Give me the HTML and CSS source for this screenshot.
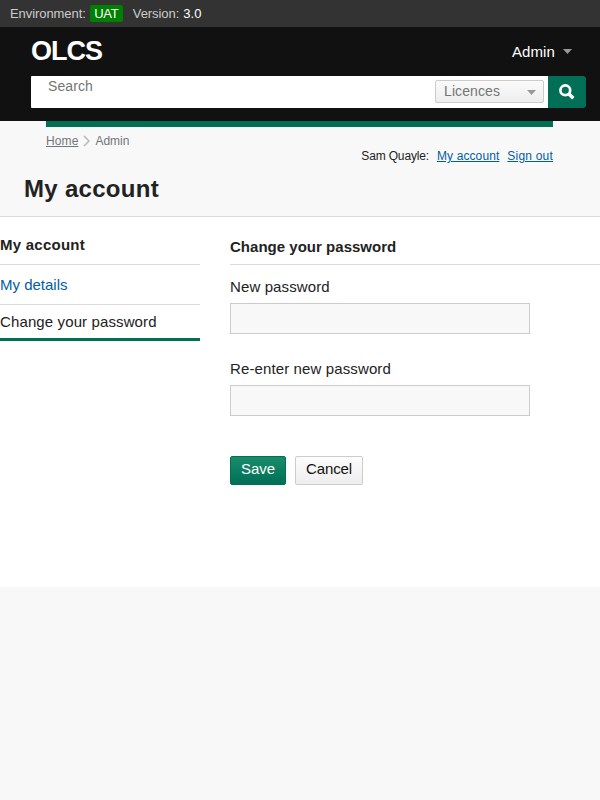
FILE: index.html
```html
<!DOCTYPE html>
<html lang="en">
<head>
<meta charset="utf-8">
<title>My account</title>
<link rel="stylesheet" href="styles.css">
</head>
<body>
<div class="env"><span>Environment:</span><span class="env-tag">UAT</span><span class="env-version">Version:</span><span class="env-number">3.0</span></div>
<header class="header">
  <div class="header-top">
    <div class="logo">OLCS</div>
    <div class="admin"><span>Admin</span><svg class="caret" viewBox="0 0 9 5"><path d="M0 0h9L4.5 5z"/></svg></div>
  </div>
  <form class="search">
    <div class="search-field">
      <span class="search-label">Search</span>
      <div class="select"><span>Licences</span><svg class="caret" viewBox="0 0 9 5"><path d="M0 0h9L4.5 5z"/></svg></div>
    </div>
    <button class="search-button" type="button" aria-label="Search"><svg viewBox="0 0 16 16" width="16" height="16"><circle cx="6.3" cy="6.3" r="4.9"/><path class="handle" d="M10 10l4.3 4.3"/></svg></button>
  </form>
</header>
<div class="page-head">
  <div class="strip">
    <nav class="crumbs"><a href="#">Home</a><svg viewBox="0 0 7 12" width="7" height="12"><path d="M1 1l5 5-5 5"/></svg><span>Admin</span></nav>
    <div class="user"><span>Sam Quayle:</span><a href="#">My account</a><a href="#">Sign out</a></div>
  </div>
  <h1>My account</h1>
</div>
<main class="content">
  <aside class="side">
    <h2>My account</h2>
    <a class="side-link" href="#">My details</a>
    <div class="side-current">Change your password</div>
  </aside>
  <form class="form">
    <h2>Change your password</h2>
    <label for="new">New password</label>
    <input id="new" type="password">
    <label for="again">Re-enter new password</label>
    <input id="again" type="password">
    <div class="actions"><button class="button save" type="button">Save</button><button class="button cancel" type="button">Cancel</button></div>
  </form>
</main>
</body>
</html>
```

FILE: styles.css
```css
* { box-sizing: border-box; }
body { margin: 0; background: #f8f8f8; color: #222; font: 15px/20px "Liberation Sans", Arial, sans-serif; }
h1, h2 { margin: 0; }
.env { height: 27px; padding-left: 10px; background: #333; color: #ccc; font-size: 13px; line-height: 17px; letter-spacing: -.07px; display: flex; align-items: center; }
.env-tag { width: 33px; height: 17px; margin-left: 4px; border-radius: 2px; background: #008000; color: #fff; text-align: center; letter-spacing: -.3px; }
.env-version { margin-left: 10px; }
.env-number { margin-left: 4px; color: #fff; letter-spacing: .1px; }
.header { height: 94px; padding: 0 14px 0 31px; background: #111; color: #fff; }
.header-top { height: 49px; display: flex; justify-content: space-between; align-items: center; }
.logo { margin-top: -2px; font-size: 27px; font-weight: bold; line-height: 30px; letter-spacing: -1px; }
.admin { display: flex; align-items: center; gap: 8px; margin-right: 14px; letter-spacing: .1px; }
.caret { width: 9px; height: 5px; fill: #999; }
.search { display: flex; height: 32px; }
.search-field { flex: 1; display: flex; justify-content: space-between; background: #fff; border-radius: 1px 0 0 1px; padding: 4px 4px 0 17px; font-size: 14px; color: #757575; }
.search-label { line-height: 16px; margin-top: -2px; letter-spacing: .1px; }
.select { width: 109px; height: 23px; padding: 0 7px 0 8px; border: 1px solid #ccc; border-radius: 2px; background: linear-gradient(#fafafa, #eee); display: flex; align-items: center; justify-content: space-between; letter-spacing: .1px; }
.select span { margin-top: -2px; }
.select .caret { margin-top: 2px; }
.search-button { width: 38px; border: 0; border-radius: 0 3px 3px 0; background: #006f56; padding: 0; display: flex; align-items: center; justify-content: center; }
.search-button svg { fill: none; stroke: #fff; stroke-width: 2.7; margin-top: -1px; }
.handle { stroke-width: 3.4; stroke-linecap: butt; }
.page-head { height: 96px; border-bottom: 1px solid #dcdcdc; }
.strip { height: 53px; margin: 0 47px 0 46px; border-top: 6px solid #006f56; display: flex; justify-content: space-between; align-items: flex-start; font-size: 12px; line-height: 14px; }
.crumbs { display: flex; align-items: center; gap: 5px; margin-top: 7px; color: #6f777b; }
.crumbs a { color: inherit; letter-spacing: .1px; }
.crumbs svg { fill: none; stroke: #b5b9bb; stroke-width: 1.5; }
.user { display: flex; gap: 8px; margin-top: 22px; letter-spacing: -.15px; }
.user a { color: #005ea5; letter-spacing: .1px; }
.user a:last-child { letter-spacing: .2px; }
h1 { margin-left: 24px; font-size: 24px; line-height: 30px; letter-spacing: .3px; }
.content { height: 370px; background: #fff; display: flex; gap: 30px; letter-spacing: .12px; }
h2 { font-size: 15px; line-height: 20px; letter-spacing: .02px; border-bottom: 1px solid #dcdcdc; height: 48px; }
.side { width: 200px; }
.side h2 { padding-top: 18px; letter-spacing: .25px; }
.side-link { display: block; height: 40px; padding-top: 10px; border-bottom: 1px solid #dcdcdc; color: #005ea5; text-decoration: none; letter-spacing: 0; }
.side-current { height: 36px; padding-top: 7px; border-bottom: 3px solid #006f56; }
.form { flex: 1; }
.form h2 { padding-top: 20px; margin-bottom: 12px; }
label { display: block; height: 26px; }
input { display: block; width: 300px; height: 31px; margin: 0 0 25px; border: 1px solid #ccc; border-radius: 0; background: #f8f8f8; }
.actions { display: flex; gap: 9px; padding-top: 15px; }
.button { height: 29px; padding: 0 0 3px; border: 1px solid #ccc; border-radius: 2px; background: linear-gradient(#fcfcfc, #eee); color: #111; font: inherit; letter-spacing: -.1px; }
.save { width: 56px; border-color: #006f56; background: linear-gradient(#1a8c6b, #006f56); color: #fff; }
.cancel { width: 68px; }
```
